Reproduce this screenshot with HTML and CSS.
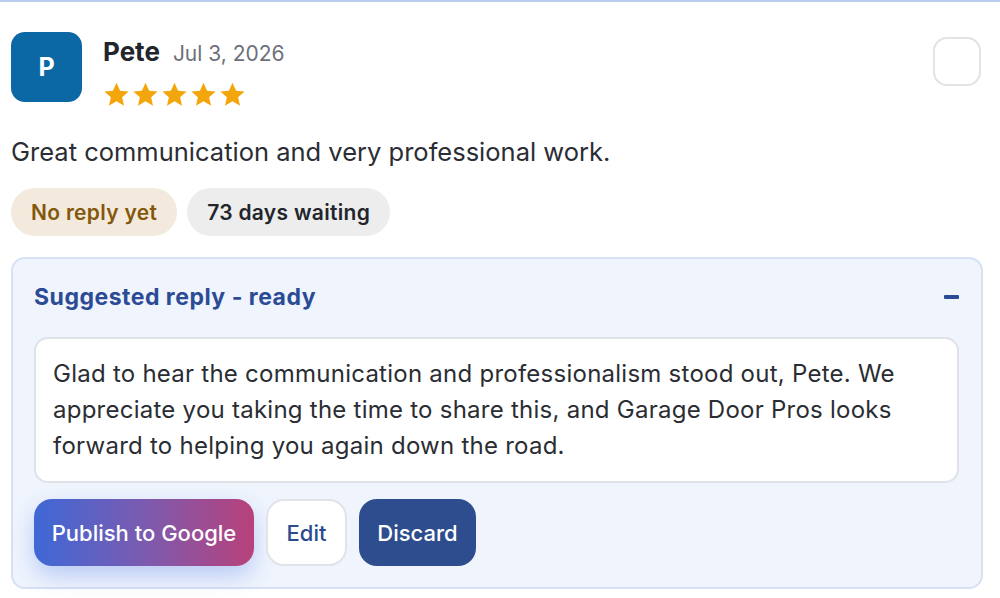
FILE: index.html
```html
<!DOCTYPE html>
<html lang="en">
<head>
    <meta charset="UTF-8">
    <meta name="viewport" content="width=device-width, initial-scale=1.0">
    <title>Review</title>
    <link rel="stylesheet" href="styles.css">
</head>
<body>
    <article class="review">
        <header class="review-head">
            <div class="avatar">P</div>
            <div class="meta">
                <div class="who">
                    <span class="name">Pete</span>
                    <span class="date">Jul 3, 2026</span>
                </div>
                <div class="stars">
                    <svg viewBox="0 0 24 24"><path d="M12 1.5l3.2 7.1 7.6.7-5.8 5.1 1.7 7.6L12 18l-6.7 4 1.7-7.6-5.8-5.1 7.6-.7z"/></svg>
                    <svg viewBox="0 0 24 24"><path d="M12 1.5l3.2 7.1 7.6.7-5.8 5.1 1.7 7.6L12 18l-6.7 4 1.7-7.6-5.8-5.1 7.6-.7z"/></svg>
                    <svg viewBox="0 0 24 24"><path d="M12 1.5l3.2 7.1 7.6.7-5.8 5.1 1.7 7.6L12 18l-6.7 4 1.7-7.6-5.8-5.1 7.6-.7z"/></svg>
                    <svg viewBox="0 0 24 24"><path d="M12 1.5l3.2 7.1 7.6.7-5.8 5.1 1.7 7.6L12 18l-6.7 4 1.7-7.6-5.8-5.1 7.6-.7z"/></svg>
                    <svg viewBox="0 0 24 24"><path d="M12 1.5l3.2 7.1 7.6.7-5.8 5.1 1.7 7.6L12 18l-6.7 4 1.7-7.6-5.8-5.1 7.6-.7z"/></svg>
                </div>
            </div>
            <label class="check"><input type="checkbox"></label>
        </header>
        <p class="text">Great communication and very professional work.</p>
        <div class="tags">
            <span class="tag tag-warn">No reply yet</span>
            <span class="tag">73 days waiting</span>
        </div>
        <section class="suggest">
            <div class="suggest-head">
                <h2>Suggested reply - ready</h2>
                <button class="toggle" aria-label="Collapse"></button>
            </div>
            <div class="draft">Glad to hear the communication and professionalism stood out, Pete. We appreciate you taking the time to share this, and Garage Door Pros looks forward to helping you again down the road.</div>
            <div class="actions">
                <button class="btn btn-publish">Publish to Google</button>
                <button class="btn btn-edit">Edit</button>
                <button class="btn btn-discard">Discard</button>
            </div>
        </section>
    </article>
</body>
</html>
```

FILE: styles.css
```css
*{
    box-sizing: border-box;
    margin: 0;
    padding: 0;
}
body{
    background-color: white;
    color: #2a2d33;
    font-family: Inter, "Noto Sans", sans-serif;
}
.review{
    border-top: 2px solid #b9cdec;
    padding: 30px 17px 10px 11px;
}
.review-head{
    display: flex;
    align-items: flex-start;
    gap: 21px;
}
.avatar{
    width: 71px;
    height: 70px;
    border-radius: 14px;
    background-color: #0b68a5;
    color: white;
    font-size: 25px;
    font-weight: 700;
    display: flex;
    align-items: center;
    justify-content: center;
}
.meta{
    flex: 1;
    padding-top: 4px;
}
.who{
    display: flex;
    align-items: baseline;
    gap: 13px;
    height: 32px;
}
.name{
    font-size: 26px;
    font-weight: 700;
    color: #22252b;
}
.date{
    font-size: 21px;
    color: #6d7079;
}
.stars{
    display: flex;
    gap: 2px;
    margin-top: 13px;
}
.stars svg{
    width: 27px;
    height: 27px;
    fill: #f2a60c;
}
.check{
    margin-top: 5px;
    margin-right: 2px;
}
.check input{
    appearance: none;
    display: block;
    width: 48px;
    height: 49px;
    border: 2px solid #e2e3e7;
    border-radius: 14px;
    background: white;
}
.text{
    margin-top: 28px;
    font-size: 25.5px;
    color: #2a2d33;
}
.tags{
    display: flex;
    gap: 10px;
    margin-top: 21px;
}
.tag{
    height: 48px;
    padding: 0 20px;
    border-radius: 24px;
    background-color: #ededee;
    color: #22252b;
    font-size: 21px;
    font-weight: 600;
    letter-spacing: 0.3px;
    display: flex;
    align-items: center;
}
.tag-warn{
    background-color: #f3e9dd;
    color: #84580b;
}
.suggest{
    margin-top: 21px;
    background-color: #eff4fd;
    border: 2px solid #d6e1f4;
    border-radius: 14px;
    padding: 21px 22px 21px 21px;
}
.suggest-head{
    display: flex;
    align-items: center;
    justify-content: space-between;
    height: 34px;
}
.suggest-head h2{
    font-size: 23px;
    font-weight: 700;
    color: #2b4b95;
    letter-spacing: 0.5px;
}
.toggle{
    width: 15px;
    height: 4px;
    border: none;
    background-color: #2b4b95;
    border-radius: 1px;
}
.draft{
    margin-top: 23px;
    background-color: white;
    border: 2px solid #dfe2e8;
    border-radius: 14px;
    padding: 17px 16px 17px 17px;
    font-size: 24px;
    line-height: 36px;
    letter-spacing: 0.25px;
    color: #2a2d33;
}
.actions{
    display: flex;
    gap: 12px;
    margin-top: 16px;
}
.btn{
    height: 67px;
    border: none;
    border-radius: 18px;
    padding: 0 10px;
    font-family: inherit;
    font-size: 22px;
    font-weight: 500;
    white-space: nowrap;
    cursor: pointer;
}
.btn-publish{
    width: 220px;
    color: white;
    background: linear-gradient(90deg, #3e68d6, #7b5bb0 50%, #b8417a);
    box-shadow: 0 10px 22px rgba(66, 110, 225, 0.3);
}
.btn-edit{
    width: 81px;
    background-color: white;
    border: 2px solid #e1e3e8;
    color: #2b4b8f;
}
.btn-discard{
    width: 117px;
    background-color: #2e4d8e;
    color: white;
}
```
